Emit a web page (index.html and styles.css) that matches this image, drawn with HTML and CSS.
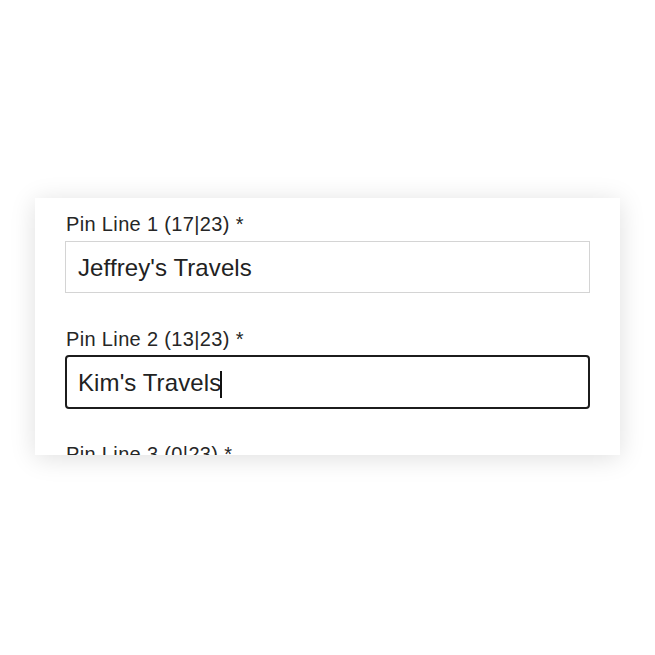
FILE: index.html
```html
<!DOCTYPE html>
<html>
<head>
<meta charset="utf-8">
<link rel="stylesheet" href="styles.css">
</head>
<body>
<div class="page">
  <div class="card">
    <div class="field">
      <div class="label">Pin Line 1 (17|23) *</div>
      <div class="input">Jeffrey's Travels</div>
    </div>
    <div class="field">
      <div class="label">Pin Line 2 (13|23) *</div>
      <div class="input focused">Kim's Travels<span class="caret"></span></div>
    </div>
    <div class="field">
      <div class="label">Pin Line 3 (0|23) *</div>
      <div class="input"></div>
    </div>
  </div>
</div>
</body>
</html>
```
FILE: styles.css
```css
html, body {
  margin: 0;
  padding: 0;
  background: #ffffff;
}
body {
  font-family: "Liberation Sans", Arial, sans-serif;
  color: #222222;
}
.page {
  width: 655px;
  height: 655px;
  padding-top: 198px;
  padding-left: 35px;
  box-sizing: border-box;
}
.card {
  width: 585px;
  height: 257px;
  background: #ffffff;
  box-shadow: 0 3px 24px rgba(0, 0, 0, 0.13);
  overflow: hidden;
  box-sizing: border-box;
  padding: 15px 30px 0 30px;
  display: flex;
  flex-direction: column;
  gap: 35px;
}
.field {
  display: flex;
  flex-direction: column;
  gap: 5px;
}
.label {
  font-size: 20px;
  line-height: 23px;
  letter-spacing: 0.35px;
  color: #262626;
  padding-left: 1px;
}
.input {
  height: 52px;
  box-sizing: border-box;
  border: 1px solid #d4d4d4;
  display: flex;
  align-items: center;
  padding: 2px 12px 0 12px;
  font-size: 24px;
  letter-spacing: 0.1px;
  color: #222222;
}
.input.focused {
  border: 2px solid #1c1c1c;
  border-radius: 4px;
  height: 54px;
  margin-top: -1px;
  margin-bottom: -1px;
  padding: 1px 11px 0 11px;
}
.caret {
  display: inline-block;
  width: 2px;
  height: 27px;
  background: #111111;
  margin-left: -1px;
  margin-top: 3px;
}
```
